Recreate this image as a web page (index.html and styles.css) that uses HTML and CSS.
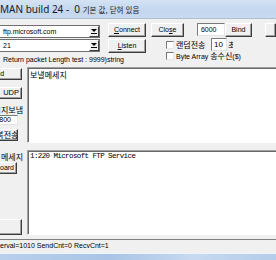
FILE: index.html
```html
<!DOCTYPE html>
<html lang="ko">
<head>
<meta charset="utf-8">
<title>MAN build 24</title>
<link rel="stylesheet" href="styles.css">
</head>
<body>
<div class="title">MAN build 24 -&nbsp; 0 <span class="tko">기본 값, 닫혀 있음</span></div>
<div class="client">
  <div class="top">
    <div class="leftblock">
      <div class="toprow">
        <div class="combos">
          <div class="combo"><span class="val">ftp.microsoft.com</span><span class="drop"><svg width="6" height="5" viewBox="0 0 6 5"><path d="M0 0h6L3 3z" fill="#000"/><path d="M0 4.5h6" stroke="#000" stroke-width="1"/></svg></span></div>
          <div class="combo"><span class="val">21</span><span class="drop"><svg width="6" height="5" viewBox="0 0 6 5"><path d="M0 0h6L3 3z" fill="#000"/><path d="M0 4.5h6" stroke="#000" stroke-width="1"/></svg></span></div>
        </div>
        <div class="btncol">
          <div class="btn connect"><u>C</u>onnect</div>
          <div class="btn listen"><u>L</u>isten</div>
        </div>
      </div>
      <div class="retline">Return packet Length test : 9999)string</div>
    </div>
    <div class="rightblock">
      <div class="row1">
        <div class="btn close">Clo<u>s</u>e</div>
        <div class="edit port">6000</div>
        <div class="btn bind">Bind</div>
        <div class="btn stub"></div>
      </div>
      <div class="chkrow r1">
        <span class="chk"></span><span class="ko lbl">랜덤전송</span><span class="edit spin">10</span><span class="ko sec">초</span>
      </div>
      <div class="chkrow r2">
        <span class="chk"></span><span class="lbl2">Byte Array <span class="ko">송수신</span>($)</span>
      </div>
    </div>
  </div>
  <div class="main">
    <div class="leftcol">
      <div class="btn lb b-send">Send</div>
      <div class="btn lb b-udp">UDP</div>
      <div class="lab l-send ko">메시지보냄</div>
      <div class="edit e-800">800</div>
      <div class="btn lb b-rep ko">반복전송</div>
      <div class="lab l-msg ko">메세지</div>
      <div class="btn lb b-board">Clipboard</div>
      <div class="btn lb b-bottom"></div>
    </div>
    <div class="areas">
      <div class="area sendarea ko">보낼메세지</div>
      <div class="area recvarea">1:220 Microsoft FTP Service</div>
    </div>
  </div>
  <div class="status">erval=1010 SendCnt=0 RecvCnt=1</div>
</div>
<div class="taskbar"></div>
</body>
</html>
```
FILE: styles.css
```css
html, body {
  margin: 0;
  padding: 0;
}
body {
  width: 276px;
  height: 260px;
  overflow: hidden;
  background: #f0f0f0;
  font-family: "Liberation Sans", "Noto Sans CJK KR", sans-serif;
  font-size: 7px;
  color: #000;
}
.ko {
  font-family: "Noto Sans CJK KR", sans-serif;
  font-size: 8px;
}
.title {
  height: 18px;
  border-bottom: 1px solid #aebfd4;
  background: linear-gradient(#d4e3f4, #c2d6ee 60%, #c8daf0);
  font-family: "Noto Sans", "Noto Sans CJK KR", sans-serif;
  font-size: 10px;
  line-height: 18px;
  white-space: nowrap;
  color: #1b1b1b;
}
.tko {
  font-family: "Noto Sans CJK KR", sans-serif;
  font-size: 7.5px;
}
.client {
  padding-top: 4px;
}
.top {
  display: flex;
  height: 44px;
}
.leftblock {
  width: 151px;
}
.toprow {
  display: flex;
}
.combos {
  width: 100px;
  margin-top: 2px;
  display: flex;
  flex-direction: column;
  gap: 1px;
}
.combo {
  display: flex;
  height: 13px;
  box-sizing: border-box;
  border: 1px solid #6f6f6f;
  border-left: none;
  background: #fff;
}
.val {
  flex: 1;
  padding-left: 3px;
  line-height: 11px;
  white-space: nowrap;
}
.drop {
  width: 10px;
  box-sizing: border-box;
  background: #f0f0f0;
  border: 1px solid;
  border-color: #fff #404040 #404040 #fff;
  display: flex;
  align-items: center;
  justify-content: center;
}
.drop svg {
  display: block;
}
.btn {
  box-sizing: border-box;
  background: #f0f0f0;
  border: 1px solid;
  border-color: #fff #3c3c3c #3c3c3c #fff;
  box-shadow: inset -1px -1px #a0a0a0;
  text-align: center;
  white-space: nowrap;
  overflow: hidden;
}
.btncol {
  margin-left: 8px;
  width: 38px;
  display: flex;
  flex-direction: column;
  gap: 2px;
}
.connect, .listen {
  height: 14px;
  line-height: 12px;
}
.retline {
  margin-top: 3px;
  padding-left: 3px;
  line-height: 8px;
  white-space: nowrap;
}
.rightblock {
  flex: 1;
  min-width: 0;
}
.row1 {
  display: flex;
  align-items: flex-start;
}
.close {
  width: 35px;
  height: 14px;
  line-height: 12px;
}
.edit {
  box-sizing: border-box;
  background: #fff;
  border: 1px solid;
  border-color: #7a7a7a #e3e3e3 #e3e3e3 #7a7a7a;
  white-space: nowrap;
  overflow: hidden;
}
.port {
  margin-left: 13px;
  width: 30px;
  height: 13px;
  line-height: 11px;
  padding-left: 3px;
}
.bind {
  width: 28px;
  height: 14px;
  line-height: 12px;
}
.stub {
  margin-left: 13px;
  width: 12px;
  height: 14px;
}
.chkrow {
  display: flex;
  align-items: center;
  white-space: nowrap;
  padding-left: 15px;
}
.r1 {
  margin-top: 1px;
  height: 13px;
}
.r2 {
  height: 9px;
}
.chk {
  width: 8px;
  height: 8px;
  box-sizing: border-box;
  background: #fff;
  border: 1px solid;
  border-color: #7a7a7a #e8e8e8 #e8e8e8 #7a7a7a;
}
.lbl {
  margin-left: 2px;
  width: 35px;
}
.spin {
  width: 16px;
  height: 13px;
  line-height: 11px;
  padding-left: 2px;
  font-size: 8px;
}
.sec {
  width: 5px;
  overflow: hidden;
  margin-left: 1px;
}
.lbl2 {
  margin-left: 2px;
}
.main {
  display: flex;
  margin-top: 0px;
}
.leftcol {
  width: 27px;
  display: flex;
  flex-direction: column;
  align-items: flex-end;
  padding-right: 5px;
  box-sizing: border-box;
}
.lb {
  height: 12px;
  line-height: 10px;
}
.b-send {
  margin-top: 1px;
  width: 52px;
  flex: none;
}
.b-udp {
  margin-top: 7px;
  width: 30px;
  text-align: right;
  padding-right: 2px;
  font-size: 7.5px;
}
.lab {
  white-space: nowrap;
  line-height: 9px;
  height: 9px;
  margin-right: -1px;
}
.l-send {
  margin-top: 6px;
}
.e-800 {
  margin-top: 1px;
  height: 10px;
  width: 30px;
  line-height: 8px;
  text-align: right;
  padding-right: 6px;
  margin-right: 4px;
}
.b-rep {
  margin-top: 4px;
  width: 30px;
  text-align: right;
  padding-right: 2px;
  margin-right: 4px;
}
.l-msg {
  margin-top: 11px;
}
.b-board {
  margin-top: 1px;
  width: 34px;
  text-align: right;
  padding-right: 2px;
  margin-right: 5px;
}
.b-bottom {
  margin-top: 45px;
  width: 30px;
  height: 16px;
}
.areas {
  flex: 1;
  margin-right: -6px;
  display: flex;
  flex-direction: column;
}
.area {
  box-sizing: border-box;
  background: #fff;
  border: 1px solid;
  border-color: #a0a0a0 #fff #fff #a0a0a0;
  box-shadow: inset 1px 1px #696969;
  white-space: nowrap;
}
.sendarea {
  height: 76px;
  padding: 2px 0 0 2px;
  line-height: 9px;
}
.recvarea {
  margin-top: 7px;
  height: 85px;
  padding: 1px 0 0 2px;
  font-family: "Liberation Mono", monospace;
  font-size: 7.5px;
  letter-spacing: -0.6px;
  line-height: 9px;
}
.status {
  margin-top: 4px;
  border-top: 1px solid #808080;
  height: 13px;
  line-height: 12px;
  white-space: nowrap;
}
.taskbar {
  height: 7px;
  border-top: 1px solid #eef4fb;
  background: linear-gradient(90deg, #b8d0ec, #a9c4e6 40%, #c6d9f0 70%, #b4cdea);
}
```
